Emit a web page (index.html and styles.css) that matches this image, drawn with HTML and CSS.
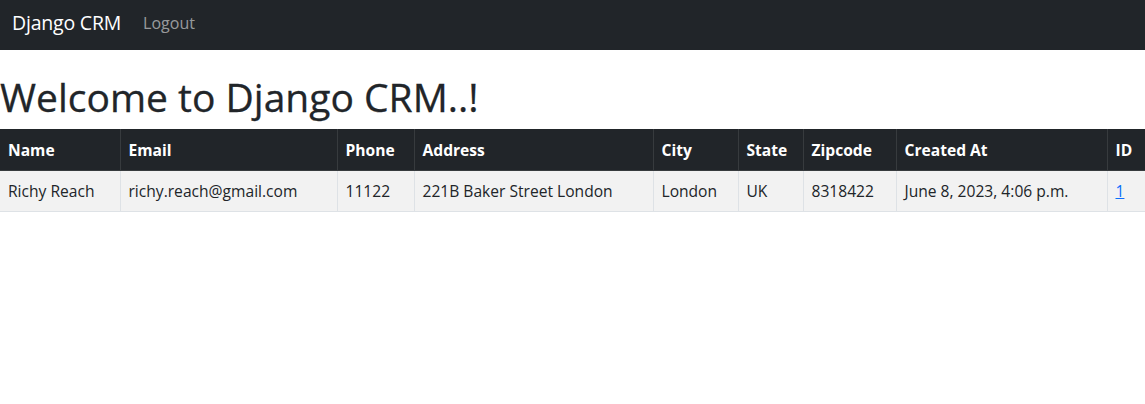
FILE: index.html
```html
<!DOCTYPE html>
<html lang="en">
<head>
<meta charset="utf-8">
<title>Django CRM</title>
<link rel="stylesheet" href="styles.css">
</head>
<body>
<nav class="navbar">
  <a class="brand" href="#">Django CRM</a>
  <a class="nav-link" href="#">Logout</a>
</nav>
<main class="content">
  <h1 class="title">Welcome to Django CRM..!</h1>
  <table class="records">
    <colgroup>
      <col class="c-name"><col class="c-email"><col class="c-phone"><col class="c-address"><col class="c-city"><col class="c-state"><col class="c-zip"><col class="c-created"><col class="c-id">
    </colgroup>
    <thead>
      <tr>
        <th>Name</th><th>Email</th><th>Phone</th><th>Address</th><th>City</th><th>State</th><th>Zipcode</th><th>Created At</th><th>ID</th>
      </tr>
    </thead>
    <tbody>
      <tr>
        <td>Richy Reach</td><td>richy.reach@gmail.com</td><td>11122</td><td>221B Baker Street London</td><td>London</td><td>UK</td><td>8318422</td><td>June 8, 2023, 4:06 p.m.</td><td><a href="#" class="id-link">1</a></td>
      </tr>
    </tbody>
  </table>
</main>
</body>
</html>
```

FILE: styles.css
```css
* { box-sizing: border-box; }
html, body { margin: 0; padding: 0; }
body {
  font-family: "Open Sans", "Noto Sans", "Liberation Sans", sans-serif;
  font-size: 16px;
  line-height: 1.5;
  color: #212529;
  background: #fff;
}
.navbar {
  height: 50px;
  background: #212529;
  display: flex;
  align-items: center;
  padding-left: 12px;
  padding-bottom: 5px;
}
.brand {
  color: #fff;
  font-size: 19.5px;
  text-decoration: none;
  margin-right: 22px;
  letter-spacing: -0.2px;
}
.nav-link {
  color: rgba(255,255,255,.55);
  font-size: 16px;
  text-decoration: none;
}
.content { padding-top: 24px; }
.title {
  margin: 0 0 8px 0;
  font-size: 39px;
  font-weight: 500;
  line-height: 1.2;
  -webkit-text-stroke: 0.3px #212529;
}
.records {
  width: 100%;
  border-collapse: collapse;
  table-layout: fixed;
  font-size: 15.6px;
}
.c-name { width: 120px; }
.c-email { width: 217px; }
.c-phone { width: 77px; }
.c-address { width: 239px; }
.c-city { width: 85px; }
.c-state { width: 65px; }
.c-zip { width: 93px; }
.c-created { width: 211px; }
.c-id { width: 38px; }
.records th, .records td {
  text-align: left;
  white-space: nowrap;
  overflow: hidden;
  border-bottom: 1px solid #dee2e6;
  border-left: 1px solid #dee2e6;
}
.records th:first-child, .records td:first-child { border-left: none; }
.records th {
  padding: 10px 8px 7px;
  background: #212529;
  color: #fff;
  font-weight: 700;
  border-color: #373b3e;
  height: 42px;
}
.records td {
  padding: 8px 8px 8px;
  background: #f2f2f2;
  height: 41px;
}
.id-link { color: #0d6efd; }
```
